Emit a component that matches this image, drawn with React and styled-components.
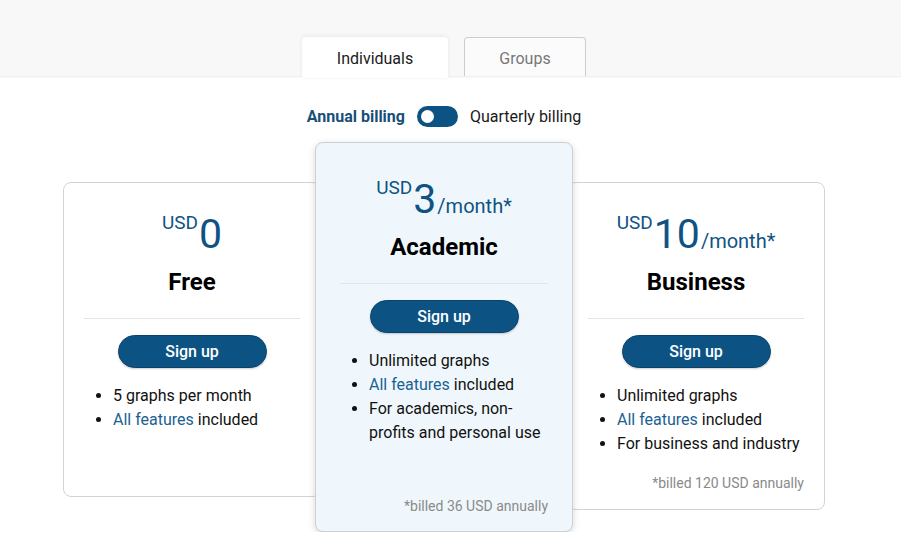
import React from "react"
import styled, { createGlobalStyle } from "styled-components"

const GlobalStyle = createGlobalStyle`
  body {
    margin: 0;
    background: #ffffff;
    font-family: Roboto, "Liberation Sans", Arial, sans-serif;
    color: #111;
  }
`

const plans = [
  {
    name: "Free",
    price: "0",
    perMonth: false,
    features: [{ text: "5 graphs per month" }, { link: "All features", text: " included" }],
    minH: 315,
  },
  {
    name: "Academic",
    price: "3",
    perMonth: true,
    featured: true,
    features: [
      { text: "Unlimited graphs" },
      { link: "All features", text: " included" },
      { text: "For academics, non-profits and personal use" },
    ],
    note: "*billed 36 USD annually",
    minH: 390,
  },
  {
    name: "Business",
    price: "10",
    perMonth: true,
    features: [
      { text: "Unlimited graphs" },
      { link: "All features", text: " included" },
      { text: "For business and industry" },
    ],
    note: "*billed 120 USD annually",
    minH: 325,
  },
]

const App = () => {
  return (
    <>
      <GlobalStyle />
      <TopBand>
        <Inner>
          <TabRow>
            <Tab $active>Individuals</Tab>
            <Tab>Groups</Tab>
          </TabRow>
        </Inner>
      </TopBand>
      <Inner>
        <BillingRow>
          <BillingLabel $active>Annual billing</BillingLabel>
          <Toggle>
            <Knob />
          </Toggle>
          <BillingLabel>Quarterly billing</BillingLabel>
        </BillingRow>
        <Cards>
          {plans.map((p) => (
            <Card key={p.name} $featured={p.featured} $minH={p.minH}>
              <PriceRow>
                <Currency>USD</Currency>
                <Amount>{p.price}</Amount>
                {p.perMonth && <Per>/month*</Per>}
              </PriceRow>
              <PlanName>{p.name}</PlanName>
              <Divider />
              <SignUp>Sign up</SignUp>
              <Features>
                {p.features.map((f, i) => (
                  <li key={i}>
                    {f.link && <FeatureLink>{f.link}</FeatureLink>}
                    {f.text}
                  </li>
                ))}
              </Features>
              {p.note && <Note>{p.note}</Note>}
            </Card>
          ))}
        </Cards>
      </Inner>
    </>
  )
}

const TopBand = styled.div`
  height: 77px;
  background: #f8f8f8;
  border-bottom: 1px solid #f0f0f0;
  box-shadow: 0 1px 2px rgba(0, 0, 0, 0.03);
  box-sizing: border-box;
`

const Inner = styled.div`
  width: 888px;
  display: flex;
  flex-direction: column;
  align-items: center;
`

const TabRow = styled.div`
  display: flex;
  gap: 16px;
  padding-top: 37px;
`

const Tab = styled.div`
  box-sizing: border-box;
  height: ${(p) => (p.$active ? "41px" : "39px")};
  width: ${(p) => (p.$active ? "146px" : "122px")};
  display: flex;
  align-items: center;
  justify-content: center;
  padding-top: ${(p) => (p.$active ? "1px" : "3px")};
  font-size: 16px;
  color: ${(p) => (p.$active ? "#1a1a1a" : "#777")};
  background: ${(p) => (p.$active ? "#ffffff" : "#fbfbfb")};
  border: ${(p) => (p.$active ? "none" : "1px solid #cdcdcd")};
  border-bottom: none;
  border-radius: 4px 4px 0 0;
  box-shadow: ${(p) => (p.$active ? "0 -1px 4px rgba(0,0,0,0.07)" : "none")};
  position: relative;
  z-index: ${(p) => (p.$active ? 2 : 1)};
`

const BillingRow = styled.div`
  display: flex;
  align-items: center;
  gap: 12px;
  margin-top: 29px;
  height: 21px;
`

const BillingLabel = styled.span`
  font-size: 16px;
  font-weight: ${(p) => (p.$active ? 700 : 400)};
  color: ${(p) => (p.$active ? "#174f78" : "#1a1a1a")};
`

const Toggle = styled.div`
  width: 41px;
  height: 21px;
  border-radius: 11px;
  background: #0c5384;
  display: flex;
  align-items: center;
  padding-left: 4px;
  box-sizing: border-box;
`

const Knob = styled.div`
  width: 13px;
  height: 13px;
  border-radius: 50%;
  background: #ffffff;
`

const Cards = styled.div`
  display: flex;
  align-items: flex-start;
  margin-top: 15px;
`

const Card = styled.div`
  box-sizing: border-box;
  width: 258px;
  min-height: ${(p) => p.$minH}px;
  margin: ${(p) => (p.$featured ? "0 -6px" : "40px 0 0")};
  padding: ${(p) => (p.$featured ? "32px 24px 15px" : "27px 20px 16px")};
  display: flex;
  flex-direction: column;
  align-items: stretch;
  background: ${(p) => (p.$featured ? "#f0f7fc" : "#ffffff")};
  border: 1px solid ${(p) => (p.$featured ? "#c9d1d7" : "#d3d3d3")};
  border-radius: 8px;
  box-shadow: ${(p) => (p.$featured ? "0 2px 7px rgba(0,0,0,0.16)" : "none")};
  position: relative;
  z-index: ${(p) => (p.$featured ? 2 : 1)};
`

const PriceRow = styled.div`
  display: flex;
  justify-content: center;
  align-items: baseline;
  height: 49px;
  color: #0f5384;
`

const Currency = styled.span`
  align-self: flex-start;
  font-size: 19px;
  line-height: 1;
  margin-top: 3px;
  margin-right: 1px;
`

const Amount = styled.span`
  font-size: 41px;
  line-height: 49px;
`

const Per = styled.span`
  font-size: 20px;
  margin-left: 1px;
`

const PlanName = styled.h2`
  margin: 8px 0 0;
  font-size: 24px;
  line-height: 30px;
  font-weight: 700;
  text-align: center;
  color: #000;
`

const Divider = styled.hr`
  margin: 21px 0 0;
  border: none;
  border-top: 1px solid #e3e6e8;
  height: 0;
`

const SignUp = styled.button`
  align-self: center;
  margin-top: 16px;
  width: 149px;
  height: 33px;
  border-radius: 17px;
  border: 1px solid #0a426b;
  background: #0c5384;
  color: #ffffff;
  font-family: inherit;
  font-size: 16px;
  font-weight: 500;
  box-shadow: 0 1px 2px rgba(0, 0, 0, 0.2);
  cursor: pointer;
`

const Features = styled.ul`
  margin: 16px 0 0;
  padding: 0 4px 0 29px;
  font-size: 16px;
  line-height: 24px;
  color: #111;
`

const FeatureLink = styled.span`
  color: #1a6293;
`

const Note = styled.div`
  margin-top: auto;
  padding-top: 17px;
  text-align: right;
  font-size: 14px;
  line-height: 20px;
  color: #8a8a8a;
`

export default App
